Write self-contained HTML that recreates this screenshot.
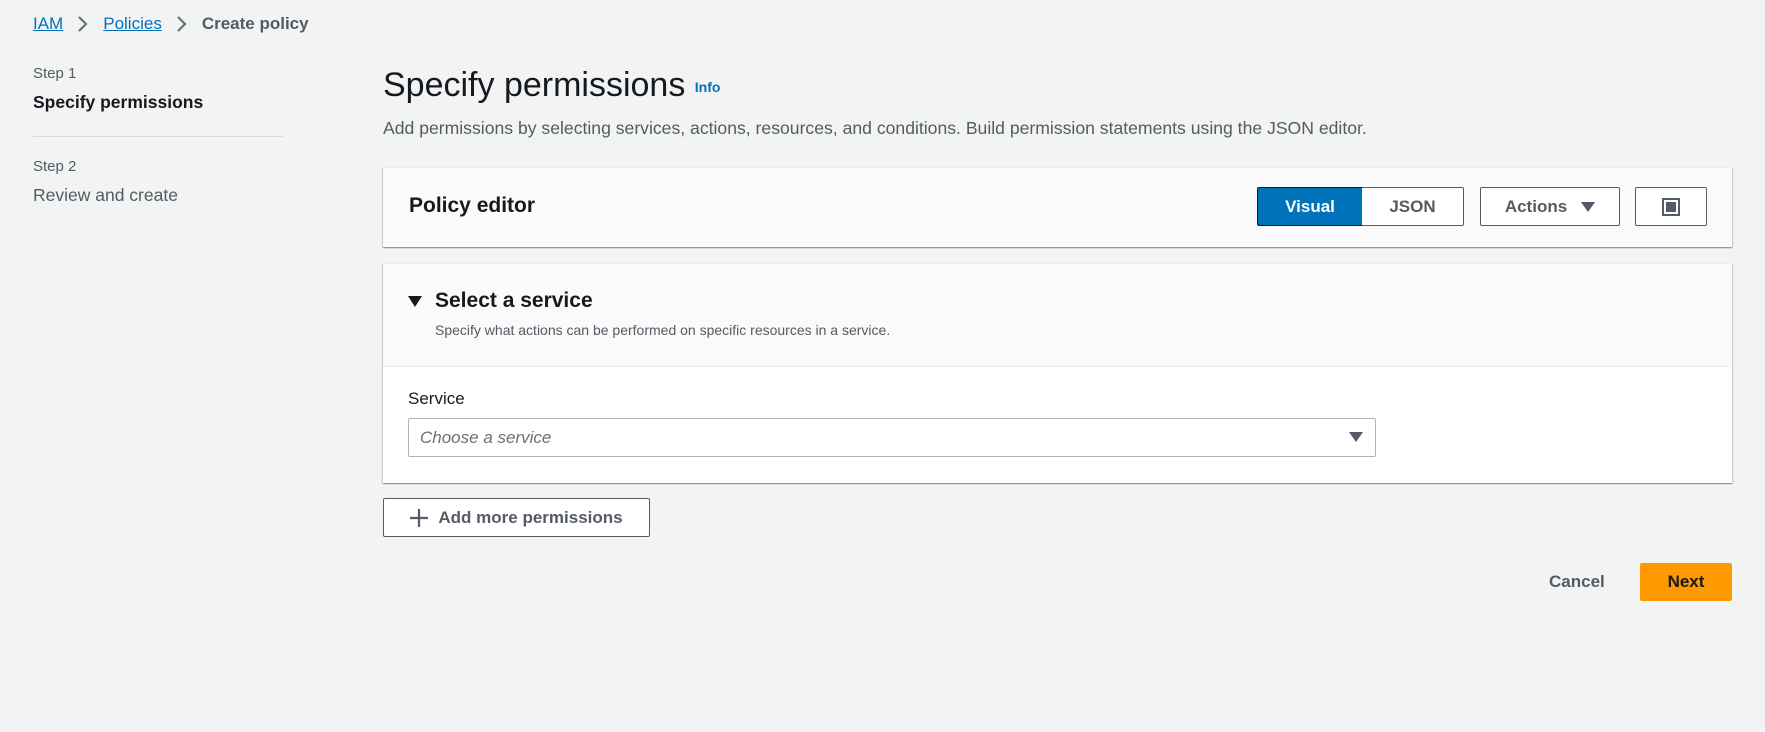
<!DOCTYPE html>
<html><head><meta charset="utf-8"><style>
*{box-sizing:border-box;margin:0;padding:0}
body{width:1765px;height:732px;background:#f2f3f3;font-family:"Liberation Sans",sans-serif;color:#16191f;position:relative;overflow:hidden}
.a{position:absolute;white-space:nowrap}
.bc{top:12px;left:33px;font-size:17px;display:flex;align-items:center;gap:0}
.bc a{color:#0073bb;text-decoration:underline}
.chev{margin:0 14px;color:#687078;display:inline-block;position:relative;top:3px}
.panel{position:absolute;left:383px;width:1349px;background:#fafafa;box-shadow:0 1px 1px 0 rgba(0,28,36,.3),1px 1px 1px 0 rgba(0,28,36,.15),-1px 1px 1px 0 rgba(0,28,36,.15);border-top:1px solid #eaeded}
.btn{position:absolute;border:1px solid #545b64;border-radius:2px;background:#fff;font-weight:bold;font-size:17px;color:#545b64;display:flex;align-items:center;justify-content:center}
</style></head><body>
<div class="a bc"><a>IAM</a><span class="chev"><svg width="12" height="18" viewBox="0 0 12 18"><path d="M2 2l7 7-7 7" fill="none" stroke="#687078" stroke-width="2.2"/></svg></span><a>Policies</a><span class="chev"><svg width="12" height="18" viewBox="0 0 12 18"><path d="M2 2l7 7-7 7" fill="none" stroke="#687078" stroke-width="2.2"/></svg></span><b style="color:#545b64">Create policy</b></div>

<div class="a" style="left:33px;top:65px;font-size:15px;color:#545b64">Step 1</div>
<div class="a" style="left:33px;top:92px;font-size:17.5px;font-weight:bold">Specify permissions</div>
<div class="a" style="left:33px;top:136px;width:250px;height:1px;background:#d5dbdb"></div>
<div class="a" style="left:33px;top:158px;font-size:15px;color:#545b64">Step 2</div>
<div class="a" style="left:33px;top:185px;font-size:17.5px;color:#545b64">Review and create</div>

<div class="a" style="left:383px;top:66px;font-size:34px">Specify permissions <span style="font-size:14px;font-weight:bold;color:#0073bb;vertical-align:middle">Info</span></div>
<div class="a" style="left:383px;top:118px;font-size:17.6px;color:#545b64">Add permissions by selecting services, actions, resources, and conditions. Build permission statements using the JSON editor.</div>

<div class="panel" style="top:167px;height:80px"></div>
<div class="a" style="left:409px;top:194px;font-size:21px;font-weight:bold">Policy editor</div>
<div class="btn" style="left:1257px;top:187px;width:106px;height:39px;background:#0073bb;border-color:#16191f;color:#fff;border-radius:2px 0 0 2px">Visual</div>
<div class="btn" style="left:1362px;top:187px;width:102px;height:39px;border-radius:0 2px 2px 0;border-left:none">JSON</div>
<div class="btn" style="left:1480px;top:187px;width:140px;height:39px">Actions <svg style="margin-left:14px" width="14" height="10" viewBox="0 0 14 10"><path d="M0 0h14L7 10z" fill="#545b64"/></svg></div>
<div class="btn" style="left:1635px;top:187px;width:72px;height:39px"><svg width="18" height="18" viewBox="0 0 18 18"><rect x="1" y="1" width="16" height="16" fill="none" stroke="#545b64" stroke-width="2"/><rect x="4" y="4" width="10" height="10" fill="#545b64"/></svg></div>

<div class="panel" style="top:263px;height:220px;background:#fff"><div style="height:103px;background:#fafafa;border-bottom:1px solid #eaeded"></div></div>
<svg class="a" style="left:408px;top:296px" width="14" height="11" viewBox="0 0 14 11"><path d="M0 0h14L7 11z" fill="#16191f"/></svg>
<div class="a" style="left:435px;top:289px;font-size:21px;font-weight:bold">Select a service</div>
<div class="a" style="left:435px;top:322px;font-size:14px;color:#545b64">Specify what actions can be performed on specific resources in a service.</div>
<div class="a" style="left:408px;top:389px;font-size:17px">Service</div>
<div class="a" style="left:408px;top:418px;width:968px;height:39px;border:1px solid #aab7b8;border-radius:2px;background:#fff"></div>
<div class="a" style="left:420px;top:428px;font-size:17px;font-style:italic;color:#687078">Choose a service</div>
<svg class="a" style="left:1349px;top:432px" width="14" height="10" viewBox="0 0 14 10"><path d="M0 0h14L7 10z" fill="#545b64"/></svg>

<div class="btn" style="left:383px;top:498px;width:267px;height:39px"><svg style="margin-right:10px" width="18" height="18" viewBox="0 0 18 18"><path d="M9 0v18M0 9h18" stroke="#545b64" stroke-width="2.2"/></svg>Add more permissions</div>

<div class="a" style="left:1549px;top:572px;font-size:17px;font-weight:bold;color:#545b64">Cancel</div>
<div class="a" style="left:1640px;top:563px;width:92px;height:38px;background:#ff9900;border-radius:2px;font-size:17px;font-weight:bold;display:flex;align-items:center;justify-content:center">Next</div>
</body></html>
